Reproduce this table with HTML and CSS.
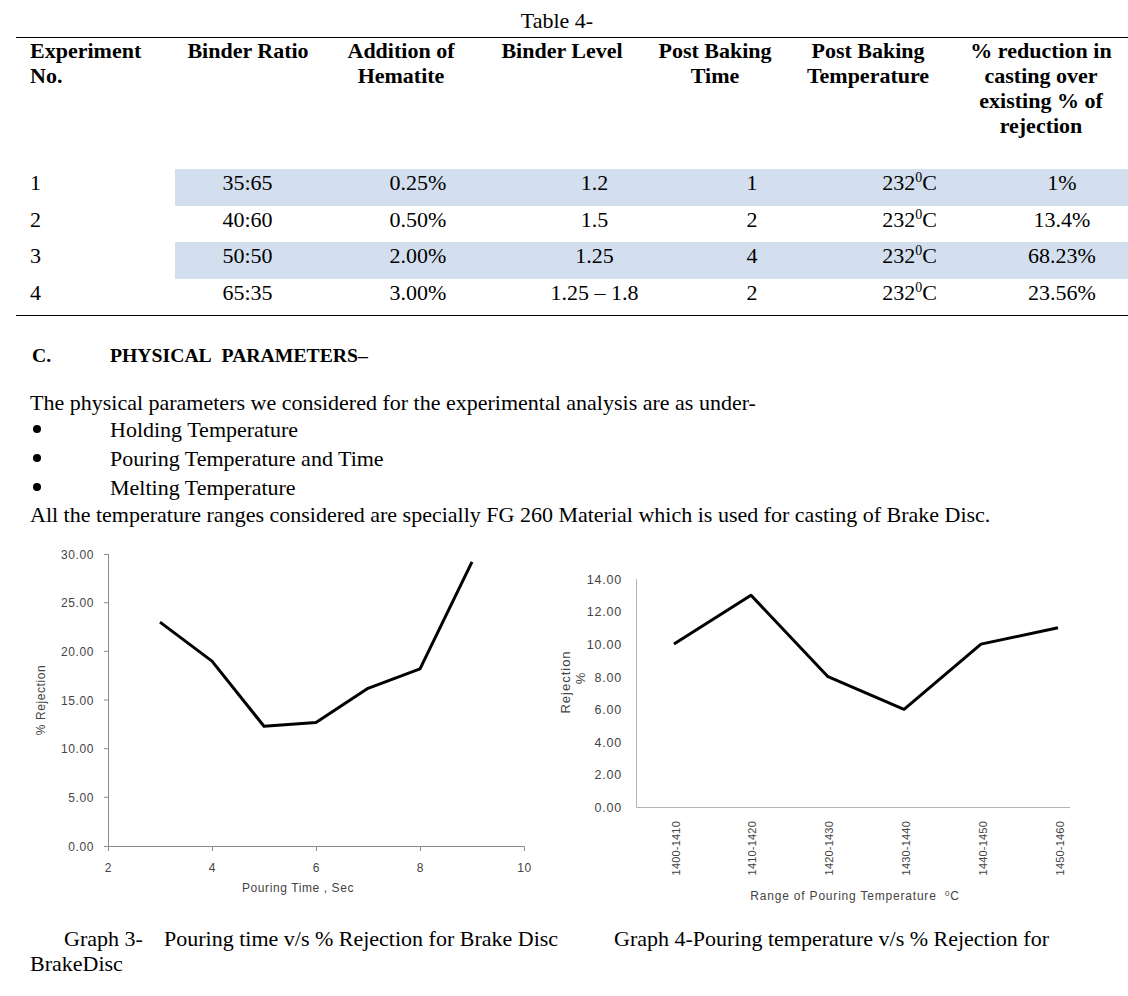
FILE: index.html
```html
<!DOCTYPE html>
<html>
<head>
<meta charset="utf-8">
<title>Table 4</title>
<link rel="stylesheet" href="styles.css">
</head>
<body>
<div class="page">
  <div class="table-title">Table 4-</div>
  <div class="tbl">
    <div class="thead">
      <div class="hc first">Experiment<br>No.</div>
      <div class="hc">Binder Ratio</div>
      <div class="hc">Addition of<br>Hematite</div>
      <div class="hc">Binder Level</div>
      <div class="hc">Post Baking<br>Time</div>
      <div class="hc">Post Baking<br>Temperature</div>
      <div class="hc">% reduction in<br>casting over<br>existing % of<br>rejection</div>
    </div>
    <div class="trow shade tall">
      <div class="c first">1</div><div class="c">35:65</div><div class="c">0.25%</div><div class="c">1.2</div><div class="c">1</div><div class="c">232<sup>0</sup>C</div><div class="c last">1%</div>
    </div>
    <div class="trow">
      <div class="c first">2</div><div class="c">40:60</div><div class="c">0.50%</div><div class="c">1.5</div><div class="c">2</div><div class="c">232<sup>0</sup>C</div><div class="c last">13.4%</div>
    </div>
    <div class="trow shade tall">
      <div class="c first">3</div><div class="c">50:50</div><div class="c">2.00%</div><div class="c">1.25</div><div class="c">4</div><div class="c">232<sup>0</sup>C</div><div class="c last">68.23%</div>
    </div>
    <div class="trow">
      <div class="c first">4</div><div class="c">65:35</div><div class="c">3.00%</div><div class="c">1.25 – 1.8</div><div class="c">2</div><div class="c">232<sup>0</sup>C</div><div class="c last">23.56%</div>
    </div>
  </div>

  <h3 class="sec"><span class="sec-num">C.</span>PHYSICAL&nbsp; PARAMETERS–</h3>
  <p class="para">The physical parameters we considered for the experimental analysis are as under-</p>
  <ul class="bullets">
    <li><span class="dot"></span>Holding Temperature</li>
    <li><span class="dot"></span>Pouring Temperature and Time</li>
    <li><span class="dot"></span>Melting Temperature</li>
  </ul>
  <p class="para">All the temperature ranges considered are specially FG 260 Material which is used for casting of Brake Disc.</p>

  <div class="charts">
    <svg class="chart1" width="540" height="380" viewBox="0 0 540 380">
      <path class="axis1" d="M92.5 26V318.5H508.5"/>
      <path class="axis1" d="M88 26.5h4.5M88 74.7h4.5M88 123.3h4.5M88 172h4.5M88 220.7h4.5M88 269.3h4.5M88 318.5h4.5M92.5 318.5v4.5M196.5 318.5v4.5M300.5 318.5v4.5M404.5 318.5v4.5M508.5 318.5v4.5"/>
      <g class="lbl" text-anchor="end">
        <text x="78" y="30.5">30.00</text>
        <text x="78" y="79">25.00</text>
        <text x="78" y="127.5">20.00</text>
        <text x="78" y="176.5">15.00</text>
        <text x="78" y="225">10.00</text>
        <text x="78" y="273.5">5.00</text>
        <text x="78" y="322.5">0.00</text>
      </g>
      <g class="lbl" text-anchor="middle">
        <text x="92.5" y="343.5">2</text>
        <text x="196.5" y="343.5">4</text>
        <text x="300.5" y="343.5">6</text>
        <text x="404.5" y="343.5">8</text>
        <text x="508.5" y="343.5">10</text>
        <text x="282" y="363.5">Pouring Time , Sec</text>
        <text transform="translate(29,172) rotate(-90)">% Rejection</text>
      </g>
      <polyline class="data" points="144,94.1 196,133.1 248,198.3 300,194.4 352,160.3 404,140.9 456,33.8"/>
    </svg>
    <svg class="chart2" width="572" height="380" viewBox="0 0 572 380">
      <path class="axis2" d="M80.5 51V279.5H514"/>
      <g class="lbl2 ylab" text-anchor="end">
        <text x="66" y="55.5">14.00</text>
        <text x="66" y="88">12.00</text>
        <text x="66" y="120.5">10.00</text>
        <text x="66" y="153.5">8.00</text>
        <text x="66" y="186">6.00</text>
        <text x="66" y="218.5">4.00</text>
        <text x="66" y="251">2.00</text>
        <text x="66" y="283.5">0.00</text>
      </g>
      <g class="lbl2 cat" text-anchor="end">
        <text transform="translate(123.5,293) rotate(-90)">1400-1410</text>
        <text transform="translate(200.3,293) rotate(-90)">1410-1420</text>
        <text transform="translate(277.1,293) rotate(-90)">1420-1430</text>
        <text transform="translate(353.9,293) rotate(-90)">1430-1440</text>
        <text transform="translate(430.7,293) rotate(-90)">1440-1450</text>
        <text transform="translate(507.5,293) rotate(-90)">1450-1460</text>
      </g>
      <g class="lbl2 ttl" text-anchor="middle">
        <text x="299" y="371.5">Range of Pouring Temperature&#160; <tspan class="supdeg" dy="-4">0</tspan><tspan dy="4">C</tspan></text>
        <text transform="translate(14,154) rotate(-90)">Rejection</text>
        <text transform="translate(29,150) rotate(-90)">%</text>
      </g>
      <polyline class="data" points="118,116.1 195,67.2 272,148.7 348,181.3 425,116.1 502,99.8"/>
    </svg>
  </div>

  <div class="captions">
    <p class="cap cap-left"><span class="cap-lead">Graph 3-</span>Pouring time v/s % Rejection for Brake Disc<br>BrakeDisc</p>
    <p class="cap cap-right">Graph 4-Pouring temperature v/s % Rejection for</p>
  </div>
</div>
</body>
</html>
```
FILE: styles.css
```css
html, body {
  margin: 0;
  padding: 0;
  background: #ffffff;
}

body {
  font-family: "Liberation Serif", "Times New Roman", serif;
  font-size: 22px;
  line-height: 25px;
  color: #000;
}

.page {
  width: 1112px;
  padding: 8px 0 0 16px;
}

.table-title {
  text-align: center;
  padding-right: 30px;
  margin-bottom: 4px;
}

.tbl {
  border-top: 1.5px solid #000;
  border-bottom: 1.5px solid #000;
}

.thead {
  display: grid;
  grid-template-columns: 154px 156px 150px 172px 134px 172px 174px;
  height: 131px;
  font-weight: bold;
}

.hc {
  text-align: center;
}

.hc.first,
.c.first {
  text-align: left;
  padding-left: 14px;
}

.trow {
  display: grid;
  grid-template-columns: 159px 145px 196px 157px 158px 157px 140px;
  height: 36px;
}

.trow.tall {
  height: 37px;
}

.c {
  text-align: center;
  padding-top: 0.5px;
}

.c.last {
  padding-left: 8px;
}

.shade .c:not(.first) {
  background: #d3dfee;
}

sup {
  font-size: 14px;
  line-height: 0;
  vertical-align: 8px;
}

.sec {
  margin: 27.5px 0 0 0;
  padding-left: 16px;
  font-size: 19.7px;
  line-height: 22px;
  font-weight: bold;
}

.sec-num {
  display: inline-block;
  width: 78px;
}

.para {
  margin: 0;
  padding-left: 14px;
}

.sec + .para {
  margin-top: 24px;
}

.bullets {
  list-style: none;
  margin: 0;
  padding: 0 0 0 14px;
}

.bullets li {
  display: flex;
  align-items: center;
  line-height: 29px;
}

.dot {
  display: inline-block;
  width: 8px;
  height: 8px;
  border-radius: 50%;
  background: #000;
  margin-left: 3px;
  margin-right: 69px;
}

.charts {
  display: flex;
  margin-top: 1.5px;
}

.charts svg {
  display: block;
  flex: none;
}

.axis1 {
  fill: none;
  stroke: #8c8c8c;
  stroke-width: 1;
}

.axis2 {
  fill: none;
  stroke: #b4b4b4;
  stroke-width: 1;
}

.lbl text,
.lbl2 text {
  font-family: "Liberation Sans", Arial, sans-serif;
  font-size: 12px;
  letter-spacing: 0.6px;
  fill: #444;
}

.lbl2.ylab text {
  font-size: 12.5px;
  letter-spacing: 0.8px;
}

.lbl2.cat text {
  font-size: 11px;
  letter-spacing: 0.2px;
}

.lbl2.ttl text {
  font-size: 12px;
  letter-spacing: 0.8px;
}

.lbl2.ttl text[transform] {
  font-size: 13px;
  letter-spacing: 1px;
}

.supdeg {
  font-size: 8px;
}

.data {
  fill: none;
  stroke: #000;
  stroke-width: 3;
  stroke-linejoin: round;
}

.captions {
  display: flex;
  margin-top: 17.5px;
}

.cap {
  margin: 0;
}

.cap-left {
  width: 584px;
  padding-left: 14px;
  text-indent: 34px;
}

.cap-lead {
  display: inline-block;
  text-indent: 0;
  width: 100px;
}

.cap-right {
  padding-left: 0;
}
```
